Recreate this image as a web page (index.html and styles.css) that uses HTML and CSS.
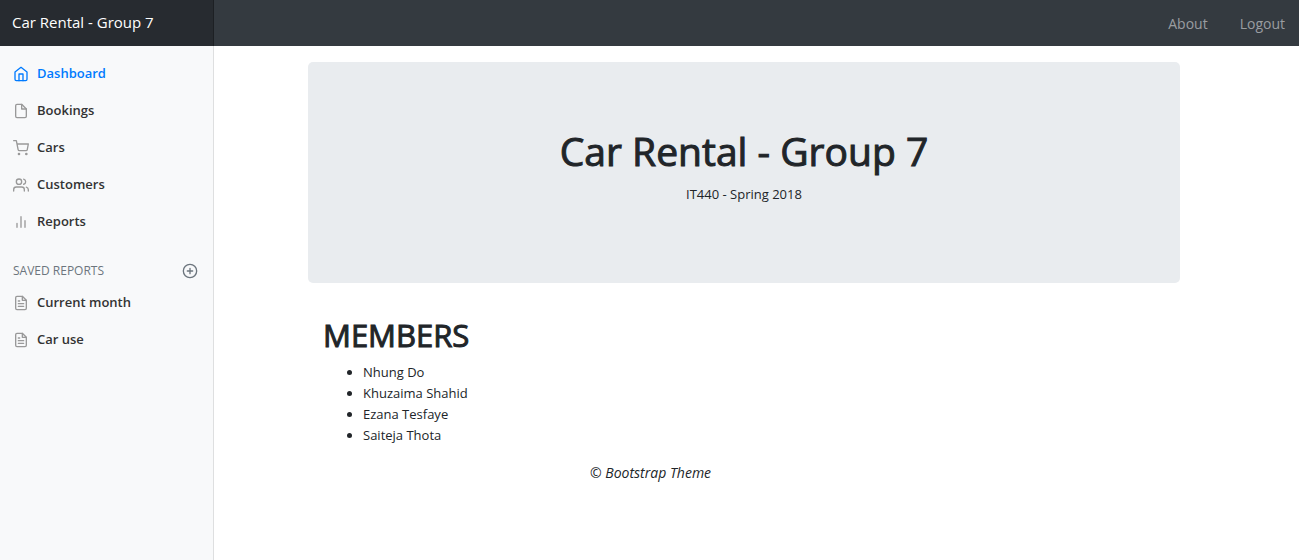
FILE: index.html
```html
<!DOCTYPE html>
<html lang="en">
<head>
<meta charset="utf-8">
<title>Car Rental - Group 7</title>
<link rel="stylesheet" href="styles.css">
</head>
<body>
<header class="navbar">
  <a class="brand" href="#">Car Rental - Group 7</a>
  <nav class="top-links">
    <a href="#">About</a>
    <a href="#">Logout</a>
  </nav>
</header>
<div class="layout">
  <aside class="sidebar">
    <nav class="menu">
      <a class="item active" href="#"><svg class="icon" viewBox="0 0 24 24"><path d="M3 9l9-7 9 7v11a2 2 0 0 1-2 2H5a2 2 0 0 1-2-2z"/><path d="M9 22V12h6v10"/></svg>Dashboard</a>
      <a class="item" href="#"><svg class="icon" viewBox="0 0 24 24"><path d="M13 2H6a2 2 0 0 0-2 2v16a2 2 0 0 0 2 2h12a2 2 0 0 0 2-2V9z"/><path d="M13 2v7h7"/></svg>Bookings</a>
      <a class="item" href="#"><svg class="icon" viewBox="0 0 24 24"><circle cx="9" cy="21" r="1"/><circle cx="20" cy="21" r="1"/><path d="M1 1h4l2.68 13.39a2 2 0 0 0 2 1.61h9.72a2 2 0 0 0 2-1.61L23 6H6"/></svg>Cars</a>
      <a class="item" href="#"><svg class="icon" viewBox="0 0 24 24"><path d="M17 21v-2a4 4 0 0 0-4-4H5a4 4 0 0 0-4 4v2"/><circle cx="9" cy="7" r="4"/><path d="M23 21v-2a4 4 0 0 0-3-3.87M16 3.13a4 4 0 0 1 0 7.75"/></svg>Customers</a>
      <a class="item" href="#"><svg class="icon" viewBox="0 0 24 24"><path d="M18 20V10M12 20V4M6 20v-6"/></svg>Reports</a>
    </nav>
    <div class="menu-head">
      <h2 class="menu-title">Saved reports</h2>
      <button class="add" type="button" aria-label="Add a report"><svg class="icon" viewBox="0 0 24 24"><circle cx="12" cy="12" r="10"/><path d="M12 8v8M8 12h8"/></svg></button>
    </div>
    <nav class="menu">
      <a class="item" href="#"><svg class="icon" viewBox="0 0 24 24"><path d="M14 2H6a2 2 0 0 0-2 2v16a2 2 0 0 0 2 2h12a2 2 0 0 0 2-2V8z"/><path d="M14 2v6h6M16 13H8M16 17H8M10 9H8"/></svg>Current month</a>
      <a class="item" href="#"><svg class="icon" viewBox="0 0 24 24"><path d="M14 2H6a2 2 0 0 0-2 2v16a2 2 0 0 0 2 2h12a2 2 0 0 0 2-2V8z"/><path d="M14 2v6h6M16 13H8M16 17H8M10 9H8"/></svg>Car use</a>
    </nav>
  </aside>
  <main class="main">
    <section class="hero">
      <h1 class="hero-title">Car Rental - Group 7</h1>
      <p class="hero-text">IT440 - Spring 2018</p>
    </section>
    <section class="members">
      <h2 class="members-title">MEMBERS</h2>
      <ul class="members-list">
        <li>Nhung Do</li>
        <li>Khuzaima Shahid</li>
        <li>Ezana Tesfaye</li>
        <li>Saiteja Thota</li>
      </ul>
    </section>
    <footer class="footer">© Bootstrap Theme</footer>
  </main>
</div>
</body>
</html>
```
FILE: styles.css
```css
* { box-sizing: border-box; }
body {
  margin: 0;
  min-height: 100vh;
  display: flex;
  flex-direction: column;
  font: 400 13px/21px "Segoe UI", "Open Sans", "Noto Sans", sans-serif;
  color: #212529;
  background: #fff;
}
a { color: inherit; text-decoration: none; }
h1, h2, p, ul { margin: 0; }
.navbar {
  display: flex;
  align-items: stretch;
  background: #343a40;
  font-size: 14px;
  color: #9a9da0;
}
.brand {
  flex: 0 0 214px;
  padding: 10px 12px 12px;
  font-size: 15px;
  line-height: 24px;
  color: #fff;
  background: rgba(0, 0, 0, .25);
  box-shadow: inset -1px 0 0 rgba(0, 0, 0, .25);
}
.top-links {
  display: flex;
  align-items: center;
  gap: 32px;
  margin-left: auto;
  padding-right: 14px;
}
.layout { display: flex; flex: 1; }
.sidebar {
  flex: 0 0 214px;
  padding-top: 9px;
  background: #f8f9fa;
  box-shadow: inset -1px 0 0 rgba(0, 0, 0, .1);
}
.item {
  display: flex;
  align-items: center;
  gap: 8px;
  padding: 8px 13px;
  font-weight: 600;
  color: #333;
}
.icon {
  display: block;
  width: 16px;
  height: 16px;
  fill: none;
  stroke: #999;
  stroke-width: 2;
  stroke-linecap: round;
  stroke-linejoin: round;
}
.active { color: #007bff; }
.active .icon { stroke: currentColor; }
.menu-head {
  display: flex;
  align-items: center;
  justify-content: space-between;
  padding: 23px 16px 5px 13px;
}
.menu-title {
  font-size: 12px;
  line-height: 16px;
  font-weight: 400;
  text-transform: uppercase;
  color: #6c757d;
}
.add { padding: 0; border: 0; background: none; cursor: pointer; }
.add .icon { stroke: #6c757d; }
.main { flex: 1; padding: 16px 119px 16px 94px; }
.hero {
  padding: 65px 32px 78px;
  border-radius: 5px;
  background: #e9ecef;
  text-align: center;
}
.hero-title,
.members-title {
  font-weight: 400;
  -webkit-text-stroke: 1px currentColor;
}
.hero-title { font-size: 39px; line-height: 48px; margin-bottom: 9px; }
.members { padding: 33px 15px 16px; }
.members-title { font-size: 31px; line-height: 38px; margin-bottom: 8px; }
.members-list { padding-left: 40px; }
.footer { padding-left: 282px; font-size: 14px; font-style: italic; }
```
